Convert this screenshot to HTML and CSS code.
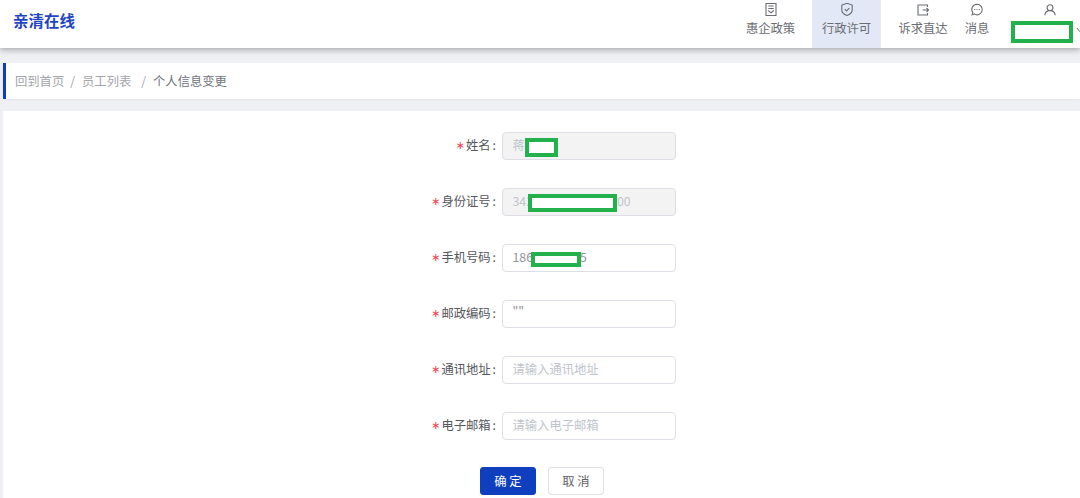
FILE: index.html
```html
<!DOCTYPE html>
<html lang="zh-CN">
<head>
<meta charset="utf-8">
<title>亲清在线</title>
<link rel="stylesheet" href="styles.css">
</head>
<body>
<header class="topbar">
  <div class="logo">亲清在线</div>
  <nav class="nav">
    <a class="nav-item policy">
      <svg class="ico" viewBox="0 0 14 14"><path d="M2 .5h10v12H2z M4.300 3h5.400 M4.300 5.500h5.400 M4.300 7.500L7 9.800l2.700-2.300"/></svg>
      <span>惠企政策</span>
    </a>
    <a class="nav-item permit active">
      <svg class="ico" viewBox="0 0 14 14"><path d="M7 .3l5.200 1.800v4.900c0 2.800-2.700 4.600-5.200 5.500-2.500-.9-5.200-2.700-5.200-5.500V2.100z M4.800 6.200l1.700 1.700 2.800-2.800"/></svg>
      <span>行政许可</span>
    </a>
    <a class="nav-item appeal">
      <svg class="ico" viewBox="0 0 14 14"><path d="M11.500 4V2H2v10h9.500v-2 M6.500 7h6 M10.500 5l2 2-2 2"/></svg>
      <span>诉求直达</span>
    </a>
    <a class="nav-item msg">
      <svg class="ico" viewBox="0 0 14 14"><path d="M7 1.200a5.300 5.300 0 1 1-2.700 9.900l-2.200.7.700-2.200A5.300 5.300 0 0 1 7 1.200z M4.200 6.500h1 M6.500 6.500h1 M8.800 6.500h1"/></svg>
      <span>消息</span>
    </a>
    <a class="nav-item user">
      <svg class="ico" viewBox="0 0 14 14"><path d="M7 1.800a2.900 2.900 0 1 1 0 5.800a2.900 2.900 0 1 1 0-5.800z M1.800 12.200c.3-2.700 2.400-4.600 5.200-4.600s4.900 1.900 5.200 4.600"/></svg>
      <span class="user-name"><span class="mask user-mask"></span></span>
      <svg class="chev" viewBox="0 0 8 6"><path d="M.8 1l3.200 3.600L7.200 1"/></svg>
    </a>
  </nav>
</header>

<div class="crumbs">
  <span class="crumb">回到首页</span><span class="sep">/</span>
  <span class="crumb">员工列表</span><span class="sep sep-wide">/</span>
  <span class="crumb current">个人信息变更</span>
</div>

<main class="card">
  <form class="form">
    <div class="row">
      <label class="label">姓名<span class="colon">:</span></label>
      <div class="field disabled"><span class="value">蒋</span><span class="mask name-mask"></span></div>
    </div>
    <div class="row">
      <label class="label">身份证号<span class="colon">:</span></label>
      <div class="field disabled"><span class="value">342</span><span class="value tail">00</span><span class="mask id-mask"></span></div>
    </div>
    <div class="row">
      <label class="label">手机号码<span class="colon">:</span></label>
      <div class="field"><span class="value filled">186</span><span class="value filled tail2">5</span><span class="mask phone-mask"></span></div>
    </div>
    <div class="row">
      <label class="label">邮政编码<span class="colon">:</span></label>
      <div class="field"><span class="value filled quote">""</span></div>
    </div>
    <div class="row">
      <label class="label">通讯地址<span class="colon">:</span></label>
      <div class="field"><span class="value">请输入通讯地址</span></div>
    </div>
    <div class="row">
      <label class="label">电子邮箱<span class="colon">:</span></label>
      <div class="field"><span class="value">请输入电子邮箱</span></div>
    </div>
    <div class="actions">
      <button type="button" class="btn primary">确 定</button>
      <button type="button" class="btn">取 消</button>
    </div>
  </form>
</main>
</body>
</html>
```
FILE: styles.css
```css
* { box-sizing: border-box; }
html, body { margin: 0; height: 498px; overflow: hidden; }
body {
  background: #eff0f4;
  font-family: "Noto Sans CJK SC", "Noto Sans", sans-serif;
  font-size: 12px;
  color: #606266;
}
.topbar {
  height: 48px;
  background: #fff;
  display: flex;
  justify-content: space-between;
  box-shadow: 0 2px 6px rgba(0, 0, 0, .3);
  position: relative;
}
.logo {
  padding: 10px 0 0 13px;
  font-size: 15.500px;
  line-height: 20px;
  font-weight: 700;
  color: #1f45c0;
}
.nav { display: flex; }
.nav-item {
  display: flex;
  flex-direction: column;
  align-items: center;
  padding-top: 3px;
  font-size: 12.300px;
  line-height: 18px;
  color: #6b6d72;
}
.ico {
  width: 14px;
  height: 14px;
  margin-bottom: 2px;
  fill: none;
  stroke: #6b6d72;
  stroke-width: 1.100;
}
.policy { width: 69px; margin-right: 7px; }
.permit { width: 69px; background: #e2e8f6; margin-right: 8px; }
.appeal { width: 68px; margin-right: 5px; }
.msg { width: 30px; margin-right: 19px; }
.user { width: 69px; position: relative; align-items: flex-start; }
.user .ico { margin-left: 32px; }
.user-name { display: block; width: 62px; height: 22px; margin-top: 2px; position: relative; }
.mask { position: absolute; background: #fff; border: 4px solid #22b14c; display: block; }
.user-mask { left: 0; top: 0; width: 62px; height: 22px; }
.chev {
  position: absolute;
  left: 65px;
  top: 27px;
  width: 8px;
  height: 6px;
  fill: none;
  stroke: #6b6d72;
}
.crumbs {
  margin: 15px 0 0 3px;
  height: 36px;
  background: #fff;
  border-left: 3px solid #0f3fbf;
  display: flex;
  align-items: center;
  padding-left: 9px;
  color: #a3a5aa;
  font-size: 12.300px;
  box-shadow: 0 1px 2px rgba(0, 0, 0, .05);
}
.sep { margin: 0 7px 0 6px; }
.sep-wide { margin: 0 7px 0 10px; }
.current { color: #70737a; }
.card {
  margin: 12px 0 0 3px;
  height: 387px;
  background: #fff;
  padding-top: 21px;
}
.form { display: flex; flex-direction: column; gap: 28px; }
.row { display: flex; align-items: center; height: 28px; }
.label {
  width: 499px;
  padding-right: 6px;
  padding-bottom: 2px;
  text-align: right;
  color: #55575c;
  font-size: 12.300px;
}
.colon { margin-left: 2px; }
.label::before {
  content: "\2217";
  font-family: "DejaVu Sans", sans-serif;
  color: #f04050;
  font-size: 11px;
  margin-right: 1px;
  vertical-align: 1px;
}
.field {
  width: 174px;
  height: 28px;
  border: 1px solid #dcdfe6;
  border-radius: 4px;
  background: #fff;
  padding: 0 0 2px 9.500px;
  display: flex;
  align-items: center;
  position: relative;
  font-size: 12.300px;
  color: #c0c4cc;
}
.disabled { background: #f3f3f3; }
.filled { color: #8f9298; }
.quote { margin-top: -3px; }
.tail { position: absolute; left: 114px; }
.tail2 { position: absolute; left: 77px; }
.name-mask { left: 22px; top: 5px; width: 33px; height: 19px; }
.id-mask { left: 25px; top: 5px; width: 89px; height: 18px; }
.phone-mask { left: 28px; top: 7px; width: 50px; height: 15px; }
.actions { display: flex; gap: 12px; padding-left: 477px; margin-top: -1px; }
.btn {
  width: 56px;
  height: 28px;
  border: 1px solid #dcdfe6;
  border-radius: 3px;
  background: #fff;
  color: #606266;
  font: inherit;
  font-size: 12.300px;
  padding: 0;
}
.primary { background: #0f3fbf; border-color: #0f3fbf; color: #fff; }
```
